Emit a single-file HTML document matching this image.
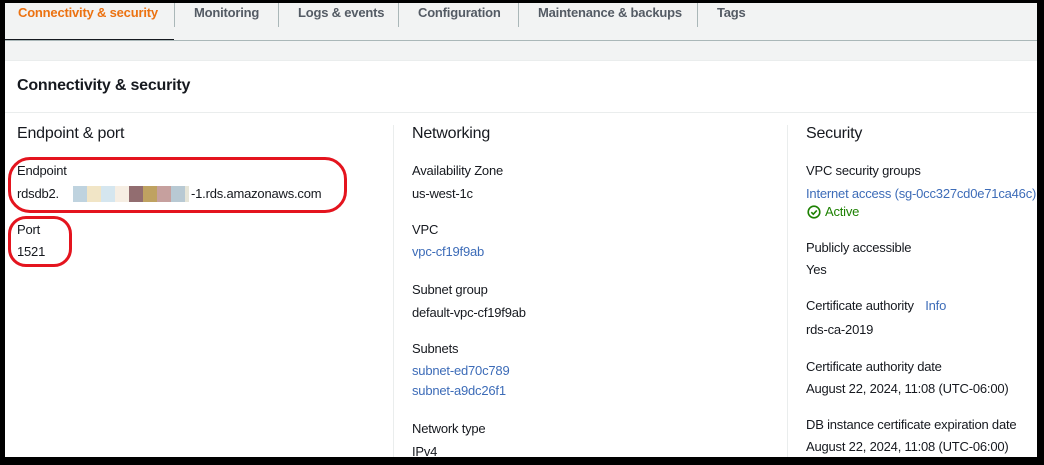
<!DOCTYPE html>
<html><head><style>
*{margin:0;padding:0;box-sizing:border-box}
body{width:1044px;height:465px;background:#000;position:relative;overflow:hidden;font-family:"Liberation Sans",sans-serif;color:#16191f}
#pg{position:absolute;left:5px;top:3px;width:1032px;height:454px;background:#f2f3f3;overflow:hidden}
.t{position:absolute;white-space:nowrap;font-size:13px;letter-spacing:-0.2px}
.tab{position:absolute;top:2px;font-weight:bold;font-size:13px;color:#545b64;letter-spacing:-0.2px}
.sep{position:absolute;top:0;width:1px;height:24px;background:#aab7b8}
.lnk{color:#3d6cb8}
.h{font-size:16px}
.vd{position:absolute;top:122px;width:1px;height:340px;background:#eaeded}
</style></head><body>
<div id="pg">
<div class="tab" style="left:13px;color:#ec7211">Connectivity &amp; security</div>
<div class="sep" style="left:169px"></div>
<div class="tab" style="left:189px">Monitoring</div>
<div class="sep" style="left:273px"></div>
<div class="tab" style="left:293px">Logs &amp; events</div>
<div class="sep" style="left:393px"></div>
<div class="tab" style="left:413px">Configuration</div>
<div class="sep" style="left:513px"></div>
<div class="tab" style="left:533px">Maintenance &amp; backups</div>
<div class="sep" style="left:692px"></div>
<div class="tab" style="left:712px">Tags</div>
<div style="position:absolute;left:0;top:36px;width:169px;height:2px;background:#16191f"></div>
<div style="position:absolute;left:0;top:37px;width:1032px;height:1px;background:#aab7b8"></div>
<div style="position:absolute;left:0;top:57px;width:1032px;height:400px;background:#fff;border-top:1px solid #eaeded"></div>
<div style="position:absolute;left:0;top:109px;width:1032px;height:1px;background:#eaeded"></div>
<div class="t" style="left:12px;top:74px;font-size:16px;font-weight:bold">Connectivity &amp; security</div>
<div class="vd" style="left:388px"></div>
<div class="vd" style="left:782px"></div>

<div class="t h" style="left:12px;top:122px">Endpoint &amp; port</div>
<div class="t" style="left:12px;top:160px">Endpoint</div>
<div class="t" style="left:12px;top:183px">rdsdb2.</div>
<div style="position:absolute;left:68px;top:183px;height:16px;display:flex">
<i style="width:14px;background:#bfd3df"></i><i style="width:14px;background:#f1e5c6"></i><i style="width:14px;background:#d5e6ef"></i><i style="width:14px;background:#f6eee3"></i><i style="width:14px;background:#926d70"></i><i style="width:14px;background:#bfa261"></i><i style="width:14px;background:#c6a09e"></i><i style="width:14px;background:#b8c9d3"></i><i style="width:4px;background:#e6e5d8"></i></div>
<div class="t" style="left:186px;top:183px">-1.rds.amazonaws.com</div>
<div class="t" style="left:12px;top:219px">Port</div>
<div class="t" style="left:12px;top:241px">1521</div>
<div style="position:absolute;left:3px;top:154px;width:339px;height:56px;border:3px solid #e4141e;border-radius:22px"></div>
<div style="position:absolute;left:3px;top:213px;width:64px;height:51px;border:3px solid #e4141e;border-radius:18px"></div>

<div class="t h" style="left:407px;top:122px">Networking</div>
<div class="t" style="left:407px;top:160px">Availability Zone</div>
<div class="t" style="left:407px;top:183px">us-west-1c</div>
<div class="t" style="left:407px;top:219px">VPC</div>
<div class="t lnk" style="left:407px;top:241px">vpc-cf19f9ab</div>
<div class="t" style="left:407px;top:279px">Subnet group</div>
<div class="t" style="left:407px;top:302px">default-vpc-cf19f9ab</div>
<div class="t" style="left:407px;top:338px">Subnets</div>
<div class="t lnk" style="left:407px;top:360px">subnet-ed70c789</div>
<div class="t lnk" style="left:407px;top:380px">subnet-a9dc26f1</div>
<div class="t" style="left:407px;top:418px">Network type</div>
<div class="t" style="left:407px;top:441px">IPv4</div>

<div class="t h" style="left:801px;top:122px">Security</div>
<div class="t" style="left:801px;top:160px">VPC security groups</div>
<div class="t lnk" style="left:801px;top:183px">Internet access (sg-0cc327cd0e71ca46c)</div>
<svg style="position:absolute;left:802px;top:202px" width="14" height="14" viewBox="0 0 14 14"><circle cx="7" cy="7" r="5.8" fill="none" stroke="#1d8102" stroke-width="1.6"/><path d="M4.3 7.2l2 2 3.5-3.8" fill="none" stroke="#1d8102" stroke-width="1.6"/></svg>
<div class="t" style="left:820px;top:201px;color:#1d8102">Active</div>
<div class="t" style="left:801px;top:237px">Publicly accessible</div>
<div class="t" style="left:801px;top:259px">Yes</div>
<div class="t" style="left:801px;top:295px">Certificate authority <span class="lnk" style="margin-left:8px">Info</span></div>
<div class="t" style="left:801px;top:319px">rds-ca-2019</div>
<div class="t" style="left:801px;top:356px">Certificate authority date</div>
<div class="t" style="left:801px;top:378px">August 22, 2024, 11:08 (UTC-06:00)</div>
<div class="t" style="left:801px;top:414px">DB instance certificate expiration date</div>
<div class="t" style="left:801px;top:436px">August 22, 2024, 11:08 (UTC-06:00)</div>
</div>
</body></html>
